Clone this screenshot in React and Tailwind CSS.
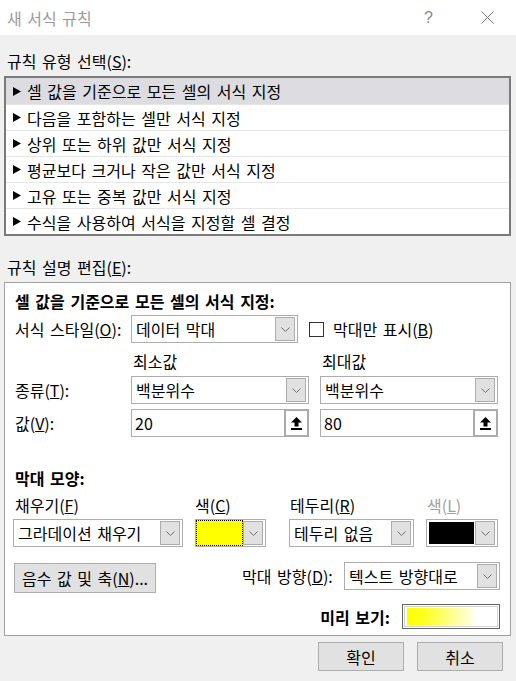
import React from "react";

const Chevron = () => (
  <svg width="9" height="5" viewBox="0 0 9 5">
    <polyline points="0.5,0.5 4.5,4.5 8.5,0.5" fill="none" stroke="#707070" strokeWidth="1" />
  </svg>
);

const ArrowBtn = () => (
  <div className="w-[20px] my-[1px] mr-[2px] bg-[#e1e1e1] border border-[#adadad] flex items-center justify-center">
    <Chevron />
  </div>
);

const Tri = () => (
  <svg width="8" height="9" viewBox="0 0 8 9" className="mr-[6px] shrink-0">
    <polygon points="0,0 8,4.5 0,9" fill="#000" />
  </svg>
);

const UpIcon = () => (
  <svg width="11" height="13" viewBox="0 0 11 13">
    <polygon points="5.5,0 11,5.5 7.5,5.5 7.5,9.5 3.5,9.5 3.5,5.5 0,5.5" fill="#000" />
    <rect x="0" y="11" width="11" height="2" fill="#000" />
  </svg>
);

function Dropdown({ className, text }) {
  return (
    <div className={"h-[28px] border border-[#adadad] bg-white flex items-stretch " + className}>
      <div className="flex-1 flex items-center pl-[4px] whitespace-nowrap overflow-hidden">{text}</div>
      <ArrowBtn />
    </div>
  );
}

function SpinInput({ value }) {
  return (
    <div className="h-[28px] w-[178px] border border-[#adadad] bg-white flex items-stretch">
      <div className="flex-1 flex items-center pl-[3px]">{value}</div>
      <div className="w-[25px] -my-[1px] -mr-[1px] border-2 border-[#ababab] bg-white flex items-center justify-center">
        <UpIcon />
      </div>
    </div>
  );
}

const items = [
  "셀 값을 기준으로 모든 셀의 서식 지정",
  "다음을 포함하는 셀만 서식 지정",
  "상위 또는 하위 값만 서식 지정",
  "평균보다 크거나 작은 값만 서식 지정",
  "고유 또는 중복 값만 서식 지정",
  "수식을 사용하여 서식을 지정할 셀 결정",
];

export default function App() {
  return (
    <div className="w-[516px] h-[681px] bg-[#f0f0f0] flex flex-col text-[16px] [word-spacing:2px] leading-none text-black font-['Noto_Sans_CJK_KR','Liberation_Sans',sans-serif] overflow-hidden">
      {/* title bar */}
      <div className="h-[35px] bg-white flex items-center pl-[7px] shrink-0">
        <span className="text-[#9a9a9a]">새 서식 규칙</span>
        <span className="ml-auto text-[#8a8a8a] text-[16px] font-['Liberation_Sans',sans-serif] mr-[48px]">?</span>
        <svg width="13" height="13" viewBox="0 0 13 13" className="mr-[22px]">
          <path d="M0.5 0.5 L12.5 12.5 M12.5 0.5 L0.5 12.5" stroke="#777" strokeWidth="1" />
        </svg>
      </div>

      <div className="h-[22px] mt-[15px] flex items-center pl-[7px]">
        규칙 유형 선택(<u>S</u>):
      </div>

      <div className="mt-[4px] ml-[4px] w-[507px] border-2 border-[#7a7a7a] bg-white flex flex-col">
        {items.map((t, i) => (
          <div
            key={i}
            className={
              "h-[26px] flex items-center pl-[7px] " +
              (i === 0 ? "bg-[#dcdce1] " : "border-t border-[#e6e6e6] ")
            }
          >
            <Tri />
            <span>{t}</span>
          </div>
        ))}
      </div>

      <div className="h-[22px] mt-[20px] flex items-center pl-[7px]">
        규칙 설명 편집(<u>E</u>):
      </div>

      <div className="mt-[4px] ml-[4px] w-[507px] h-[354px] border border-[#a0a0a0] bg-white flex flex-col shrink-0">
        <div className="h-[22px] mt-[7px] pl-[10px] flex items-center font-bold">
          셀 값을 기준으로 모든 셀의 서식 지정:
        </div>

        <div className="h-[28px] mt-[3px] pl-[10px] flex items-center">
          <div className="w-[116px]">서식 스타일(<u>O</u>):</div>
          <Dropdown className="w-[167px]" text="데이터 막대" />
          <div className="ml-[11px] w-[15px] h-[15px] border border-[#333] bg-white" />
          <div className="ml-[9px]">막대만 표시(<u>B</u>)</div>
        </div>

        <div className="h-[22px] mt-[7px] pl-[128px] flex items-center">
          <div className="w-[189px]">최소값</div>
          <div>최대값</div>
        </div>

        <div className="h-[28px] mt-[4px] pl-[10px] flex items-center">
          <div className="w-[116px]">종류(<u>T</u>):</div>
          <Dropdown className="w-[178px]" text="백분위수" />
          <Dropdown className="w-[178px] ml-[11px]" text="백분위수" />
        </div>

        <div className="h-[28px] mt-[5px] pl-[10px] flex items-center">
          <div className="w-[116px]">값(<u>V</u>):</div>
          <SpinInput value="20" />
          <div className="ml-[11px]">
            <SpinInput value="80" />
          </div>
        </div>

        <div className="h-[22px] mt-[30px] pl-[10px] flex items-center font-bold">막대 모양:</div>

        <div className="h-[22px] mt-[5px] pl-[10px] flex items-center">
          <div className="w-[180px]">채우기(<u>F</u>)</div>
          <div className="w-[95px]">색(<u>C</u>)</div>
          <div className="w-[137px]">테두리(<u>R</u>)</div>
          <div className="text-[#a0a0a0]">색(<u>L</u>)</div>
        </div>

        <div className="h-[28px] mt-[3px] pl-[8px] flex items-center">
          <Dropdown className="w-[170px]" text="그라데이션 채우기" />
          <div className="ml-[12px] w-[71px] h-[28px] border border-[#adadad] bg-white flex items-stretch">
            <div className="flex-1 bg-[#ffff00] border border-dotted border-black" />
            <ArrowBtn />
          </div>
          <Dropdown className="w-[125px] ml-[23px]" text="테두리 없음" />
          <div className="ml-[12px] w-[72px] h-[28px] border border-[#adadad] bg-white flex items-stretch">
            <div className="flex-1 bg-black m-[2px] mr-[1px]" />
            <ArrowBtn />
          </div>
        </div>

        <div className="h-[31px] mt-[15px] pl-[9px] flex items-start">
          <div className="mt-[1px] w-[142px] h-[30px] bg-[#e1e1e1] border border-[#adadad] flex items-center justify-center">
            음수 값 및 축(<u>N</u>)...
          </div>
          <div className="ml-[86px] h-[28px] flex items-center">막대 방향(<u>D</u>):</div>
          <div className="flex-1" />
          <Dropdown className="w-[156px] mr-[10px]" text="텍스트 방향대로" />
        </div>

        <div className="h-[25px] mt-[11px] flex items-center justify-end pr-[10px]">
          <div className="font-bold mr-[12px]">미리 보기:</div>
          <div className="w-[98px] h-[25px] border border-[#646464] bg-white p-[1px]">
            <div className="w-full h-full border border-[#d4d4d4] pl-[2px] py-[1px]">
              <div className="w-[67px] h-full bg-[linear-gradient(to_right,#ffff00_0%,#ffff20_25%,#ffffe8_100%)]" />
            </div>
          </div>
        </div>
      </div>

      <div className="mt-[6px] h-[29px] flex justify-end gap-[13px] pr-[13px]">
        <div className="w-[86px] h-[29px] bg-[#e1e1e1] border border-[#adadad] flex items-center justify-center">확인</div>
        <div className="w-[86px] h-[29px] bg-[#e1e1e1] border border-[#adadad] flex items-center justify-center">취소</div>
      </div>
    </div>
  );
}
